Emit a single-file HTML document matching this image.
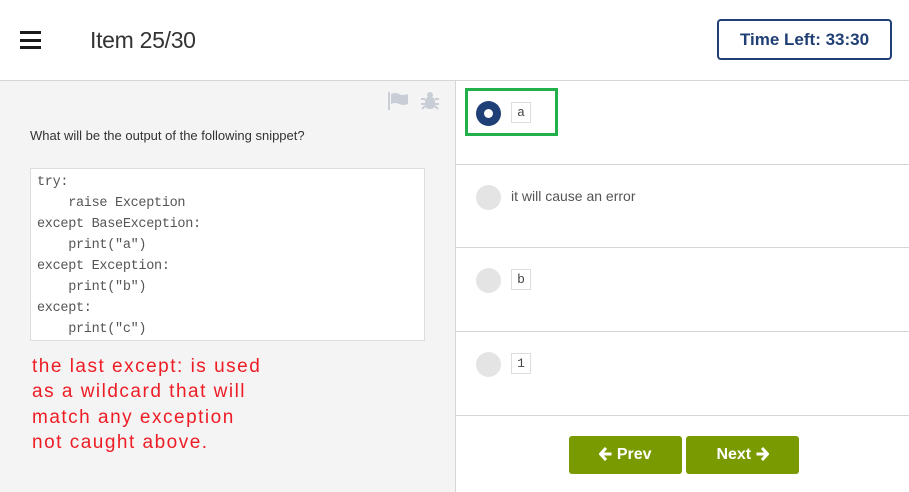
<!DOCTYPE html>
<html><head><meta charset="utf-8"><style>
*{margin:0;padding:0;box-sizing:border-box}
body{width:909px;height:492px;position:relative;background:#fff;font-family:"Liberation Sans",sans-serif;overflow:hidden}
.abs{position:absolute}
.bar{position:absolute;left:20px;width:21px;height:3px;background:#1a1a1a}
.code{font-family:"Liberation Mono",monospace;font-size:13.5px;color:#555;white-space:pre;line-height:21px;letter-spacing:-0.3px}
.sep{position:absolute;left:456px;width:453px;height:1px;background:#d6d6d6}
.radio{position:absolute;width:25px;height:25px;border-radius:50%;background:#e4e4e4}
.cb{position:absolute;border:1px solid #ddd;background:#fff;font-family:"Liberation Mono",monospace;font-size:13px;color:#444;text-align:center;line-height:19px;width:20px;height:21px}
.btn{position:absolute;top:436px;width:113px;height:38px;background:#7a9a01;border-radius:3px;color:#fff;font-weight:bold;font-size:16px;text-align:center;line-height:38px}
.btn svg{vertical-align:-2px}
</style></head><body>
<div class="bar" style="top:31px"></div><div class="bar" style="top:39px"></div><div class="bar" style="top:46px"></div>
<div class="abs" style="left:90px;top:27px;font-size:23px;color:#333;letter-spacing:-0.3px">Item 25/30</div>
<div class="abs" style="left:717px;top:19px;width:175px;height:41px;border:2px solid #1f3f75;border-radius:4px;color:#1f3f75;font-weight:bold;font-size:17px;line-height:37px;text-align:center;font-family:'Liberation Sans Narrow','Liberation Sans',sans-serif">Time Left: 33:30</div>
<div class="abs" style="left:0;top:80px;width:909px;height:1px;background:#d6d6d6"></div>
<div class="abs" style="left:0;top:81px;width:455px;height:411px;background:#f4f4f4"></div>
<div class="abs" style="left:455px;top:81px;width:1px;height:411px;background:#d6d6d6"></div>
<svg class="abs" style="left:388px;top:92px" width="22" height="18" viewBox="0 0 22 18"><rect x="0" y="0" width="2" height="18" fill="#c9ced6"/><path d="M3 2 Q8 0 11 2 T20 2 V12 Q15 14 11 12 T3 12Z" fill="#c9ced6"/></svg>
<svg class="abs" style="left:420px;top:91px" width="20" height="20" viewBox="0 0 20 20" fill="#c9ced6"><circle cx="10" cy="4" r="3"/><rect x="5" y="6" width="10" height="12" rx="4"/><path d="M1 8h4M15 8h4M1 13h4M15 13h4M2 18l3-3M18 18l-3-3" stroke="#c9ced6" stroke-width="2"/></svg>
<div class="abs" style="left:30px;top:128px;font-size:13px;color:#333">What will be the output of the following snippet?</div>
<div class="abs code" style="left:30px;top:168px;width:395px;height:173px;background:#fff;border:1px solid #ddd;padding:3px 0 0 6px">try:
    raise Exception
except BaseException:
    print("a")
except Exception:
    print("b")
except:
    print("c")</div>
<div class="abs" style="left:32px;top:354px;line-height:25.3px;color:#ee1c24;letter-spacing:1.5px;font-family:'Liberation Sans',sans-serif;font-size:19px">the last except: is used<br>as a wildcard that will<br>match any exception<br>not caught above.</div>
<div class="abs" style="left:465px;top:88px;width:93px;height:48px;border:3px solid #22b04b"></div>
<div class="radio" style="left:476px;top:101px;background:#1f4076"></div>
<div class="abs" style="left:484px;top:109px;width:9px;height:9px;border-radius:50%;background:#fff"></div>
<div class="cb" style="left:511px;top:102px">a</div>
<div class="sep" style="top:164px"></div>
<div class="radio" style="left:476px;top:185px"></div>
<div class="abs" style="left:511px;top:188px;font-size:14px;color:#555">it will cause an error</div>
<div class="sep" style="top:247px"></div>
<div class="radio" style="left:476px;top:268px"></div>
<div class="cb" style="left:511px;top:269px">b</div>
<div class="sep" style="top:331px"></div>
<div class="radio" style="left:476px;top:352px"></div>
<div class="cb" style="left:511px;top:353px">1</div>
<div class="sep" style="top:415px"></div>
<div class="btn" style="left:569px"><svg width="13" height="14" viewBox="0 0 13 14"><path d="M7 1L1.5 7L7 13M2 7H12.5" stroke="#fff" stroke-width="3" fill="none"/></svg> Prev</div>
<div class="btn" style="left:686px">Next <svg width="13" height="14" viewBox="0 0 13 14"><path d="M6 1L11.5 7L6 13M11 7H0.5" stroke="#fff" stroke-width="3" fill="none"/></svg></div>
</body></html>
